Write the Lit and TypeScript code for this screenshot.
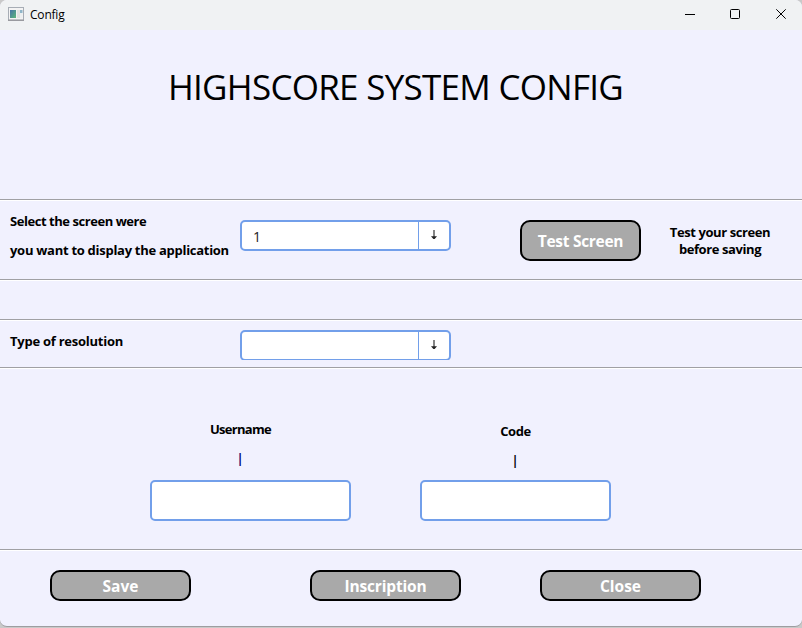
import { LitElement, html, css } from "lit";
import { customElement, property } from "lit/decorators.js";

@customElement("combo-box")
class ComboBox extends LitElement {
  @property() value = "";

  static styles = css`
    :host { display: block; width: 211px; height: 31px; overflow: hidden; }
    .box {
      box-sizing: border-box; width: 211px; height: 31px; display: flex;
      border: 2px solid #729fea; border-radius: 5px; background: #fff;
      font: 14px/29px "Open Sans", "Noto Sans", sans-serif; color: #222;
    }
    .value { width: 176px; box-sizing: border-box; padding: 0 0 0 11px; }
    .drop { flex: 1; border-left: 1px solid #729fea; padding: 8px 0 0 12px; line-height: 0; }
  `;

  render() {
    return html`<div class="box">
      <div class="value">${this.value}</div>
      <div class="drop">
        <svg width="6" height="10" viewBox="0 0 6 10">
          <path d="M2 0h2v7h-2z" fill="#858585" />
          <path d="M0 6.2h6L3.6 9h-1.2z" fill="#222" />
        </svg>
      </div>
    </div>`;
  }
}

@customElement("app-root")
class AppRoot extends LitElement {
  static styles = css`
    :host {
      display: block; width: 802px; height: 628px; overflow: hidden;
      background: #c9c9c9; color: #000;
      font-family: "Open Sans", "Noto Sans", sans-serif;
    }
    .window {
      box-sizing: border-box; height: 627px; overflow: hidden; background: #f1f1fe;
      border-bottom: 1px solid #9d9da0; border-radius: 7px;
    }
    .titlebar { height: 30px; background: #f0f2f3; display: flex; }
    .appicon { margin: 7px 0 0 8px; }
    .caption { margin: 5px 0 0 6px; font-size: 12px; line-height: 20px; letter-spacing: -0.2px; flex: 1; }
    .controls { margin: 9px 15px 0 0; }
    .title { height: 169px; box-sizing: border-box; padding-top: 33px; text-align: center; }
    h1 { margin: 0; padding-right: 11px; font-weight: 400; font-size: 35px; line-height: 48px; letter-spacing: -0.72px; white-space: nowrap; }
    .row { box-sizing: border-box; border-top: 1px solid #a0a0a4; box-shadow: inset 0 1px #fff; display: flex; align-items: flex-start; }
    .label { font-size: 13px; font-weight: 700; white-space: nowrap; line-height: 17px; }
    .screen { height: 80px; }
    .gap { height: 40px; }
    .resolution { height: 48px; }
    .accounts { height: 182px; }
    .actions { height: 77px; padding-left: 50px; }
    .side { box-sizing: border-box; width: 240px; padding-left: 10px; }
    .screen .side { line-height: 29px; padding-top: 7px; letter-spacing: -0.28px; }
    .screen .side .lead { letter-spacing: -0.45px; }
    .resolution .side { padding-top: 13px; letter-spacing: -0.25px; }
    .screen combo-box { margin-top: 20px; }
    .resolution combo-box { margin-top: 10px; height: 30px; }
    .hint { width: 120px; margin: 24px 0 0 19px; text-align: center; letter-spacing: -0.41px; }
    .button {
      box-sizing: border-box; border: 2px solid #000; border-radius: 10px; background: #a9a9a9; color: #fff;
      font: 700 15.5px/28px "Open Sans", "Noto Sans", sans-serif; text-align: center;
      margin: 20px 0 0; padding: 0; height: 31px; white-space: nowrap;
    }
    .test { width: 121px; height: 41px; margin-left: 69px; line-height: 38px; letter-spacing: -0.3px; }
    .save { width: 141px; }
    .inscription { width: 151px; margin-left: 119px; letter-spacing: -0.15px; }
    .close { width: 161px; margin-left: 79px; }
    .field { display: flex; flex-direction: column; height: 153px; }
    .user { margin-left: 150px; width: 201px; }
    .code { margin-left: 69px; width: 191px; }
    .name { padding: 53px 20px 0 0; text-align: center; letter-spacing: -0.7px; }
    .code .name { padding: 55px 0 0; letter-spacing: -0.4px; }
    .mark { font-size: 12px; line-height: 14px; height: 14px; text-align: center; margin-top: 14px; padding-right: 21px; color: #000070; font-weight: 700; }
    .code .mark { padding: 0 1px 0 0; color: #000; }
    .entry { box-sizing: border-box; width: 100%; height: 41px; margin-top: auto; border: 2px solid #729fea; border-radius: 5px; background: #fff; }
  `;

  private icon() {
    return html`<svg class="appicon" width="16" height="14" viewBox="0 0 16 14">
      <defs>
        <linearGradient id="g" x1="0" y1="0" x2="1" y2="1"><stop stop-color="#4773a8"/><stop offset="1" stop-color="#5cb879"/></linearGradient>
      </defs>
      <rect x="0.5" y="0.5" width="15" height="12.5" fill="#f3f3f3" stroke="#a7adb5"/>
      <path d="M0 13.3h16" stroke="#8d8d92"/>
      <rect x="2" y="3" width="6" height="8" fill="url(#g)"/>
      <rect x="9" y="3" width="3" height="8" fill="#e2e2e2"/>
      <rect x="12" y="3" width="2.5" height="3" fill="#8fb6c9"/>
      <rect x="12" y="6" width="2.5" height="5" fill="#eceff0"/>
    </svg>`;
  }

  render() {
    return html`<div class="window">
      <div class="titlebar">
        ${this.icon()}
        <div class="caption">Config</div>
        <svg class="controls" width="102" height="12" viewBox="0 0 102 12" fill="none" stroke="#000">
          <path d="M0 5.5h10" />
          <rect x="45.5" y="0.5" width="9" height="9" rx="1" />
          <path d="M91.3 0.3l9.4 9.4M100.7 0.3l-9.4 9.4" />
        </svg>
      </div>
      <div class="title"><h1>HIGHSCORE SYSTEM CONFIG</h1></div>
      <div class="row screen">
        <div class="label side"><span class="lead">Select the screen were</span><br />you want to display the application</div>
        <combo-box value="1"></combo-box>
        <button class="button test">Test Screen</button>
        <div class="label hint">Test your screen<br />before saving</div>
      </div>
      <div class="row gap"></div>
      <div class="row resolution">
        <div class="label side">Type of resolution</div>
        <combo-box></combo-box>
      </div>
      <div class="row accounts">
        <div class="field user">
          <div class="label name">Username</div>
          <div class="mark">|</div>
          <div class="entry"></div>
        </div>
        <div class="field code">
          <div class="label name">Code</div>
          <div class="mark">|</div>
          <div class="entry"></div>
        </div>
      </div>
      <div class="row actions">
        <button class="button save">Save</button>
        <button class="button inscription">Inscription</button>
        <button class="button close">Close</button>
      </div>
    </div>`;
  }
}
